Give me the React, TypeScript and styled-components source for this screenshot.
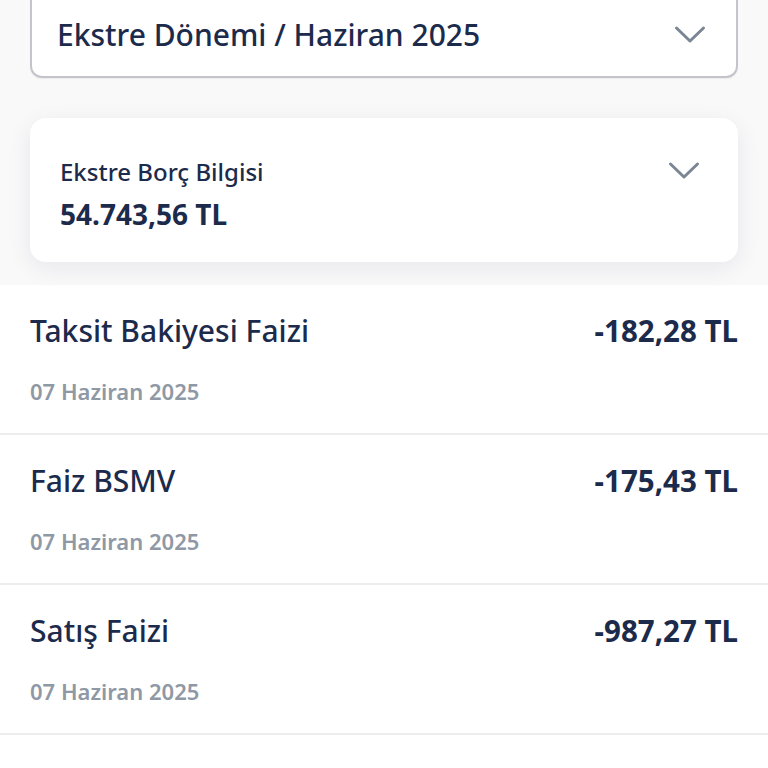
import React from "react";
import styled, { createGlobalStyle } from "styled-components";

const GlobalStyle = createGlobalStyle`
  html, body { margin: 0; padding: 0; background: #ffffff; }
  body { font-family: "Noto Sans", "Open Sans", sans-serif; color: #1c2b4b; }
  * { box-sizing: border-box; }
`;

const Page = styled.div`
  width: 768px;
  height: 768px;
  overflow: hidden;
  background: #ffffff;
  display: flex;
  flex-direction: column;
`;

const Header = styled.div`
  background: #f9f9fa;
  padding: 0 30px 23px;
  display: flex;
  flex-direction: column;
  gap: 40px;
`;

const Select = styled.div`
  margin-top: -40px;
  height: 118px;
  border: 2px solid #c4c5ca;
  border-top: none;
  border-radius: 0 0 12px 12px;
  background: #ffffff;
  display: flex;
  align-items: flex-end;
  padding: 0 30px 21px 25px;
  box-shadow: 0 1px 1px rgba(0, 0, 0, 0.06);
`;

const SelectRow = styled.div`
  flex: 1;
  height: 40px;
  display: flex;
  align-items: center;
  justify-content: space-between;
`;

const SelectText = styled.span`
  font-size: 30px;
  line-height: 40px;
  font-weight: 500;
  color: #1c2b4b;
`;

const Chevron = styled.svg<{ $offset?: number }>`
  width: 32px;
  height: 20px;
  flex: none;
  margin-top: ${(p) => p.$offset ?? 0}px;
`;

const Card = styled.div`
  height: 144px;
  background: #ffffff;
  border-radius: 16px;
  box-shadow: 0 6px 24px rgba(20, 30, 50, 0.08);
  display: flex;
  justify-content: space-between;
  align-items: flex-start;
  padding: 38px 38px 0 30px;
`;

const CardBody = styled.div`
  display: flex;
  flex-direction: column;
  gap: 8px;
`;

const CardLabel = styled.span`
  font-size: 24px;
  line-height: 32px;
  font-weight: 500;
  color: #1c2b4b;
`;

const CardValue = styled.span`
  font-size: 28px;
  line-height: 36px;
  font-weight: 700;
  color: #1c2b4b;
`;

const List = styled.div`
  display: flex;
  flex-direction: column;
`;

const Row = styled.div`
  height: 150px;
  padding: 26px 30px 0;
  border-bottom: 2px solid #ededee;
  display: flex;
  flex-direction: column;
  gap: 25px;
`;

const RowTop = styled.div`
  display: flex;
  justify-content: space-between;
  align-items: center;
`;

const Title = styled.span`
  font-size: 30px;
  line-height: 40px;
  font-weight: 500;
  color: #1c2b4b;
`;

const Amount = styled.span`
  font-size: 29.5px;
  line-height: 40px;
  font-weight: 700;
  color: #1c2b4b;
`;

const DateText = styled.span`
  font-size: 22px;
  line-height: 30px;
  font-weight: 600;
  color: #8f98a5;
`;

const ChevronIcon = ({ offset }: { offset?: number }) => (
  <Chevron $offset={offset} viewBox="0 0 32 20" fill="none">
    <path
      d="M2.5 3 L16 16 L29.5 3"
      stroke="#7b8694"
      strokeWidth="3"
      strokeLinecap="round"
      strokeLinejoin="round"
    />
  </Chevron>
);

const items = [
  { title: "Taksit Bakiyesi Faizi", amount: "-182,28 TL", date: "07 Haziran 2025" },
  { title: "Faiz BSMV", amount: "-175,43 TL", date: "07 Haziran 2025" },
  { title: "Satış Faizi", amount: "-987,27 TL", date: "07 Haziran 2025" },
];

export default function App() {
  return (
    <>
      <GlobalStyle />
      <Page>
        <Header>
          <Select>
            <SelectRow>
              <SelectText>Ekstre Dönemi / Haziran 2025</SelectText>
              <ChevronIcon />
            </SelectRow>
          </Select>
          <Card>
            <CardBody>
              <CardLabel>Ekstre Borç Bilgisi</CardLabel>
              <CardValue>54.743,56 TL</CardValue>
            </CardBody>
            <ChevronIcon offset={5} />
          </Card>
        </Header>
        <List>
          {items.map((it) => (
            <Row key={it.title}>
              <RowTop>
                <Title>{it.title}</Title>
                <Amount>{it.amount}</Amount>
              </RowTop>
              <DateText>{it.date}</DateText>
            </Row>
          ))}
        </List>
      </Page>
    </>
  );
}
